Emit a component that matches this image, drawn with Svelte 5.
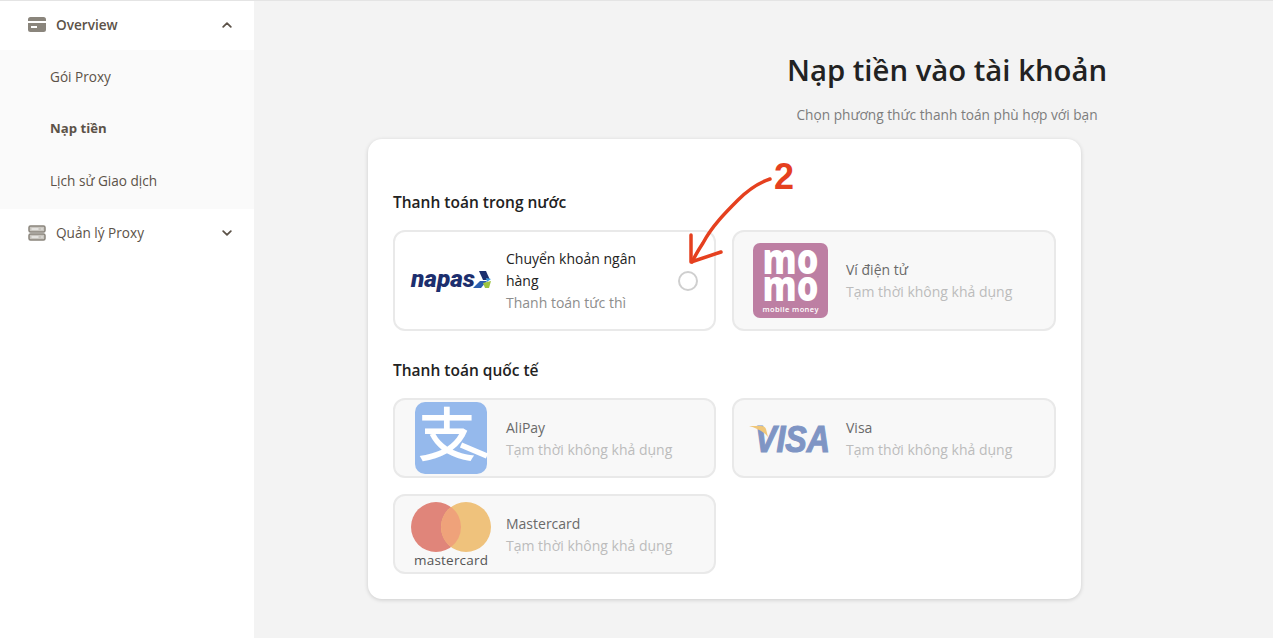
<script lang="ts">
  const unavailable = 'Tạm thời không khả dụng';
</script>

<div class="page">
  <aside class="sidebar">
    <div class="nav-head first">
      <svg class="nav-icon" viewBox="0 0 18 15" width="18" height="15">
        <path d="M2.500 0h13A2.500 2.500 0 0 1 18 2.500V4H0V2.500A2.500 2.500 0 0 1 2.500 0zM0 6h18v6.500a2.500 2.500 0 0 1-2.500 2.500h-13A2.500 2.500 0 0 1 0 12.500zM3 9v2h6V9z" fill="#8a857c" fill-rule="evenodd" />
      </svg>
      <span class="nav-title strong">Overview</span>
      <svg class="chev" viewBox="0 0 10 6" width="10" height="6"><path d="M1.200 4.800 5 1.200l3.800 3.600" /></svg>
    </div>
    <div class="sub">
      <div class="sub-item">Gói Proxy</div>
      <div class="sub-item active">Nạp tiền</div>
      <div class="sub-item">Lịch sử Giao dịch</div>
    </div>
    <div class="nav-head">
      <svg class="nav-icon" viewBox="0 0 18 16" width="18" height="16">
        <g fill="none" stroke="#8a857c" stroke-width="1.500">
          <rect x="1" y="1" width="16" height="6" rx="1.500" fill="#c9c6c0" />
          <rect x="1" y="9" width="16" height="6" rx="1.500" fill="#c9c6c0" />
          <path d="M3.500 4h7M3.500 12h7M13.500 4h1M13.500 12h1" stroke="#fff" stroke-width="1" />
        </g>
      </svg>
      <span class="nav-title">Quản lý Proxy</span>
      <svg class="chev" viewBox="0 0 10 6" width="10" height="6"><path d="M1.200 1.200 5 4.800l3.800-3.600" /></svg>
    </div>
  </aside>

  <main class="main">
    <header class="header">
      <h1>Nạp tiền vào tài khoản</h1>
      <p>Chọn phương thức thanh toán phù hợp với bạn</p>
    </header>

    <section class="card">
      <h2>Thanh toán trong nước</h2>
      <div class="options">
        <div class="option tall">
          <div class="logo">
            <svg viewBox="0 0 82 24" width="82" height="24">
              <text class="napas" x="1" y="18" textLength="64" lengthAdjust="spacingAndGlyphs">napas</text>
              <polygon points="69,2 76,2 80,11 73,11" fill="#1c2f6e" />
              <polygon points="76,9 81,10 77,13" fill="#3f9bdc" />
              <polygon points="63,19 71,19 77,12 70,12" fill="#2a5fb0" />
              <polygon points="73,14 81,12 79,19 75,19" fill="#9cc441" />
            </svg>
          </div>
          <div class="info">
            <div class="name dark">Chuyển khoản ngân hàng</div>
            <div class="hint">Thanh toán tức thì</div>
          </div>
          <span class="radio"></span>
        </div>

        <div class="option tall off">
          <div class="logo">
            <svg viewBox="0 0 75 75" width="75" height="75">
              <rect width="75" height="75" rx="7" fill="#bd7fa3" />
              <text class="momo" x="37.500" y="31" textLength="56" lengthAdjust="spacingAndGlyphs" text-anchor="middle">mo</text>
              <text class="momo" x="37.500" y="58" textLength="56" lengthAdjust="spacingAndGlyphs" text-anchor="middle">mo</text>
              <text class="momo-sub" x="37.500" y="69" textLength="56" text-anchor="middle">mobile money</text>
            </svg>
          </div>
          <div class="info">
            <div class="name">Ví điện tử</div>
            <div class="hint">{unavailable}</div>
          </div>
        </div>
      </div>

      <h2 class="second">Thanh toán quốc tế</h2>
      <div class="options">
        <div class="option off">
          <div class="logo">
            <svg viewBox="0 0 72 72" width="72" height="72">
              <rect width="72" height="72" rx="10" fill="#95b9ec" />
              <text class="alipay" x="32" y="54" text-anchor="middle">支</text>
              <path d="M46 43 72 54" stroke="#fff" stroke-width="5.500" />
            </svg>
          </div>
          <div class="info">
            <div class="name">AliPay</div>
            <div class="hint">{unavailable}</div>
          </div>
        </div>

        <div class="option off">
          <div class="logo">
            <svg viewBox="0 0 82 32" width="82" height="32">
              <text class="visa" x="6" y="29.500" textLength="75" lengthAdjust="spacingAndGlyphs">VISA</text>
              <path d="M0 4h12c3 0 4 1 5 3l2 8C15 10 8 6 0 4z" fill="#f0c77a" />
            </svg>
          </div>
          <div class="info">
            <div class="name">Visa</div>
            <div class="hint">{unavailable}</div>
          </div>
        </div>

        <div class="option off">
          <div class="logo">
            <svg viewBox="0 0 80 66" width="80" height="66">
              <circle cx="25" cy="26" r="25" fill="#e0857a" />
              <circle cx="55" cy="26" r="25" fill="#efc27c" />
              <path d="M40 6a25 25 0 0 1 0 40a25 25 0 0 1 0-40z" fill="#efa27a" />
              <text class="mc" x="40" y="64" text-anchor="middle" textLength="74">mastercard</text>
            </svg>
          </div>
          <div class="info">
            <div class="name">Mastercard</div>
            <div class="hint">{unavailable}</div>
          </div>
        </div>
      </div>
    </section>

    <div class="note">
      <span class="note-num">2</span>
      <svg viewBox="0 0 100 110" width="100" height="110">
        <path d="M92 19C80 23 70 30 60 40 48 52 34 66 25 83 21 89 17 96 14 102" fill="none" stroke="#e5401f" stroke-width="3.500" stroke-linecap="round" />
        <path d="M13 75 13 102 43 92" fill="none" stroke="#e5401f" stroke-width="3.500" stroke-linecap="round" stroke-linejoin="round" />
      </svg>
    </div>
  </main>
</div>

<style>
  :global(body) {
    margin: 0;
    background: #f3f3f3;
  }

  .page {
    display: flex;
    height: 638px;
    overflow: hidden;
    border-top: 1px solid #e4e4e4;
    box-sizing: border-box;
    font-family: "Open Sans", "Noto Sans", sans-serif;
    color: #222;
  }

  .sidebar {
    width: 254px;
    flex-shrink: 0;
    background: #fff;
  }

  .nav-head {
    box-sizing: border-box;
    display: flex;
    align-items: center;
    height: 47px;
    padding: 0 22px 0 28px;
    font-size: 13.600px;
    color: #5c5248;
  }

  .nav-head.first {
    height: 49px;
    padding-bottom: 2px;
  }

  .nav-icon {
    margin-right: 10px;
  }

  .nav-title {
    flex: 1;
  }

  .strong {
    font-weight: 600;
  }

  .chev {
    fill: none;
    stroke: #5c5248;
    stroke-width: 1.800;
    stroke-linecap: round;
    stroke-linejoin: round;
  }

  .sub {
    background: #fafafa;
    padding-bottom: 3px;
  }

  .sub-item {
    display: flex;
    align-items: center;
    height: 52px;
    padding-left: 50px;
    font-size: 13.600px;
    color: #5c5248;
  }

  .sub-item.active {
    font-size: 13.200px;
    font-weight: 700;
  }

  .main {
    position: relative;
    flex: 1;
  }

  .header {
    width: 520px;
    margin-left: 433px;
    text-align: center;
  }

  h1 {
    margin: 0;
    padding-top: 47px;
    font-size: 29.300px;
    line-height: 44px;
    font-weight: 600;
    color: #222;
  }

  .header p {
    margin: 13px 0 0;
    font-size: 13.700px;
    line-height: 20px;
    color: #7d7d7d;
  }

  .card {
    box-sizing: border-box;
    width: 713px;
    height: 460px;
    margin: 14px 0 0 114px;
    padding: 51px 25px 0;
    background: #fff;
    border-radius: 14px;
    box-shadow: 0 1px 4px rgba(0, 0, 0, 0.16);
  }

  h2 {
    margin: 0 0 16px;
    font-size: 15.500px;
    line-height: 24px;
    font-weight: 600;
    color: #222;
  }

  h2.second {
    margin: 27px 0 16px;
  }

  .options {
    display: grid;
    grid-template-columns: 323px 324px;
    gap: 16px;
  }

  .option {
    box-sizing: border-box;
    display: flex;
    align-items: center;
    height: 80px;
    border: 2px solid #e9e9e9;
    border-radius: 12px;
    background: #fff;
  }

  .option.tall {
    height: 101px;
  }

  .option.off {
    background: #f8f8f8;
  }

  .option:nth-child(2) .logo {
    width: 112px;
  }

  .logo {
    display: flex;
    align-items: center;
    justify-content: center;
    width: 111px;
    flex-shrink: 0;
    height: 100%;
  }

  .logo svg {
    overflow: visible;
  }

  .info {
    flex: 1;
    min-width: 0;
    padding: 1px 8px 0 0;
    font-size: 14px;
    line-height: 22px;
  }

  .name {
    color: #6a6a6a;
    font-weight: 500;
  }

  .name.dark {
    color: #222;
  }

  .hint {
    color: #8d8d8d;
  }

  .off .hint {
    color: #bcbcbc;
  }

  .radio {
    box-sizing: border-box;
    width: 20px;
    height: 20px;
    flex-shrink: 0;
    margin: 0 16px 0 10px;
    border: 2px solid #cfcfcf;
    border-radius: 50%;
  }

  .napas {
    font: italic 900 23px "Roboto", sans-serif;
    fill: #1c2f6e;
  }

  .momo {
    font: 900 43px "Noto Sans", sans-serif;
    fill: #fff;
  }

  .momo-sub {
    font: 600 7.500px "Open Sans", sans-serif;
    fill: #fff;
  }

  .alipay {
    font: 500 58px "Noto Sans CJK SC", sans-serif;
    fill: #fff;
  }

  .visa {
    font: italic 700 36px "Liberation Sans", sans-serif;
    fill: #7f95c4;
    stroke: #7f95c4;
    stroke-width: 1.200px;
  }

  .mc {
    font: 500 13.500px "Open Sans", sans-serif;
    fill: #555;
  }

  .note {
    position: absolute;
    left: 424px;
    top: 154px;
    width: 130px;
    height: 120px;
  }

  .note svg {
    position: absolute;
    left: 0;
    top: 5px;
  }

  .note-num {
    position: absolute;
    left: 96px;
    top: 0;
    font: 700 36px/44px "Liberation Sans", sans-serif;
    color: #e5401f;
  }
</style>
